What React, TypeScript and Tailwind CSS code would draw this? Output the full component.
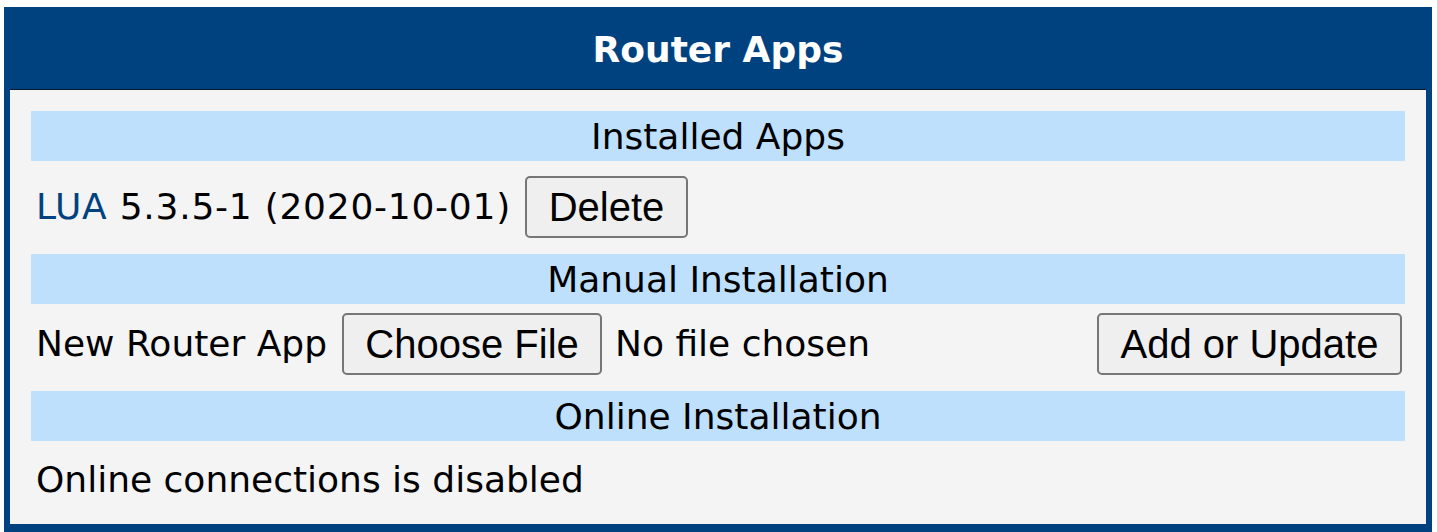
import React from "react";

const body = { fontFamily: '"DejaVu Sans", Verdana, Tahoma, sans-serif' };
const btn = { fontFamily: '"Liberation Sans", Arial, sans-serif' };

function Stripe({ children }: { children: React.ReactNode }) {
  return (
    <div className="h-[50px] bg-[#bfe0fd] flex items-center justify-center text-[36px] text-black leading-none pt-[1px]">
      {children}
    </div>
  );
}

function Button({ children, w }: { children: React.ReactNode; w: string }) {
  return (
    <button
      className={`h-[62px] ${w} rounded-[5px] border-2 border-[#767676] bg-[#efefef] text-[40px] text-black leading-none flex items-center justify-center`}
      style={btn}
    >
      {children}
    </button>
  );
}

export default function App() {
  return (
    <div className="w-[1437px] h-[532px] bg-white pt-[7px] pl-[4px] pr-[5px]" style={body}>
      <div className="bg-[#00427f] h-[525px] flex flex-col px-[6px] pb-[8px]">
        <div className="h-[82px] flex items-center justify-center text-white font-bold text-[36px] leading-none pt-[4px]">
          Router Apps
        </div>
        <div className="h-px bg-[#0a1a2a]" />
        <div className="flex-1 bg-[#f4f4f4] px-[21px] pt-[21px] text-[36px] text-black">
          <Stripe>Installed Apps</Stripe>
          <div className="h-[93px] flex items-center pl-[5px] pb-[1px]">
            <span className="leading-none tracking-[0.75px]">
              <span className="text-[#00427f]">LUA</span> 5.3.5-1 (2020-10-01)
            </span>
            <div className="ml-[14px]">
              <Button w="w-[163px]">Delete</Button>
            </div>
          </div>
          <Stripe>Manual Installation</Stripe>
          <div className="h-[87px] flex items-center pl-[5px] pb-[7px]">
            <span className="leading-none">New Router App</span>
            <div className="ml-[15px]">
              <Button w="w-[260px]">Choose File</Button>
            </div>
            <span className="leading-none ml-[13px]">No file chosen</span>
            <div className="ml-auto mr-[3px]">
              <Button w="w-[305px]">Add or Update</Button>
            </div>
          </div>
          <Stripe>Online Installation</Stripe>
          <div className="h-[76px] flex items-center pl-[5px] pt-[1px]">
            <span className="leading-none">Online connections is disabled</span>
          </div>
        </div>
      </div>
    </div>
  );
}
